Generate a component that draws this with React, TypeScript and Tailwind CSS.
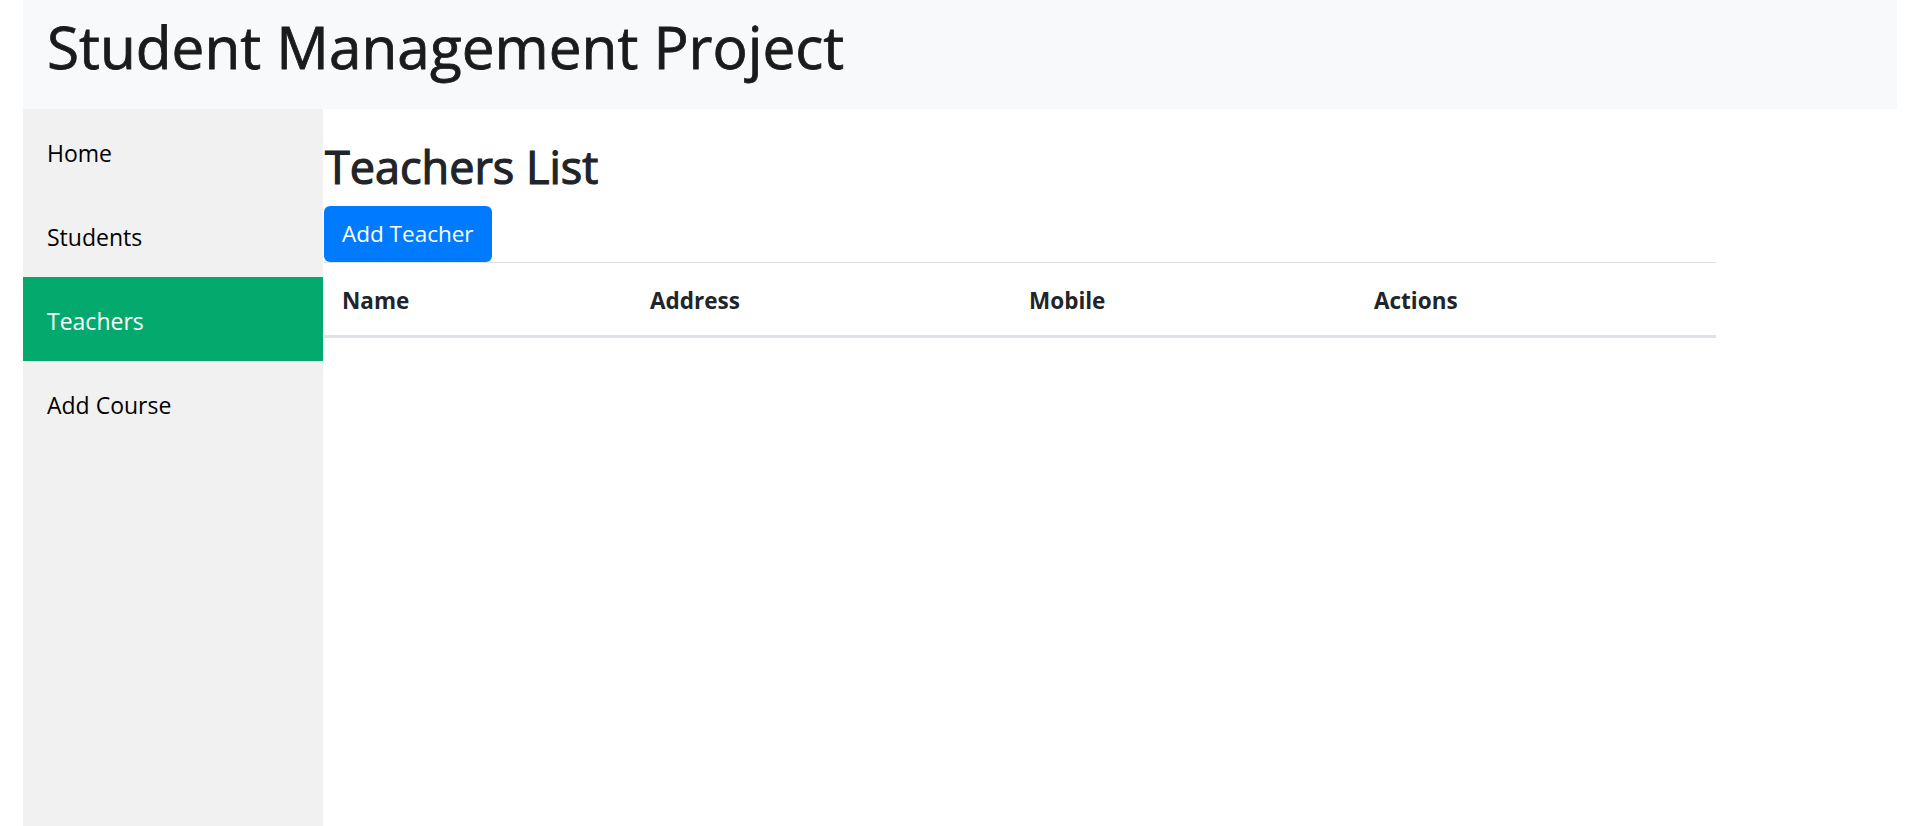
const navItems = ["Home", "Students", "Teachers", "Add Course"];

const columns = [
  { label: "Name", width: "w-[308px]" },
  { label: "Address", width: "w-[379px]" },
  { label: "Mobile", width: "w-[345px]" },
  { label: "Actions", width: "w-[360px]" },
];

const App = () => {
  return (
    <div className="h-screen flex flex-col px-[23px] bg-white font-['Open_Sans',sans-serif] overflow-hidden">
      <header className="h-[109px] shrink-0 bg-[#f8f9fa] pl-[24px] pt-[10px]">
        <h1 className="text-[58.5px] leading-[72px] text-[#1b1b1b] [-webkit-text-stroke:0.8px_#1b1b1b]">
          Student Management Project
        </h1>
      </header>

      <div className="flex flex-1">
        <nav className="w-[300px] shrink-0 bg-[#f1f1f1]">
          {navItems.map((item) => (
            <a
              key={item}
              href="#"
              className={
                item === "Teachers"
                  ? "flex h-[84px] items-center px-6 pt-[5px] text-[23px] bg-[#04aa6d] text-white"
                  : "flex h-[84px] items-center px-6 pt-[5px] text-[23px] text-black"
              }
            >
              {item}
            </a>
          ))}
        </nav>

        <main className="flex-1 pt-[31px] pl-px">
          <h2 className="pl-px text-[45px] leading-[54px] text-[#212529] mb-[12px] [-webkit-text-stroke:1.2px_#212529]">
            Teachers List
          </h2>
          <button className="h-[56px] px-[18px] rounded-[6px] bg-[#007bff] text-white text-[22.5px]">
            Add Teacher
          </button>
          <table className="w-[1392px] border-collapse text-left table-fixed">
            <thead>
              <tr className="border-t-[1.5px] border-b-[3px] border-[#dee2e6]">
                {columns.map((col) => (
                  <th
                    key={col.label}
                    className={`${col.width} h-[74px] px-[18px] pt-[3px] text-[22.5px] font-bold text-[#212529]`}
                  >
                    {col.label}
                  </th>
                ))}
              </tr>
            </thead>
            <tbody></tbody>
          </table>
        </main>
      </div>
    </div>
  );
};

export default App;
